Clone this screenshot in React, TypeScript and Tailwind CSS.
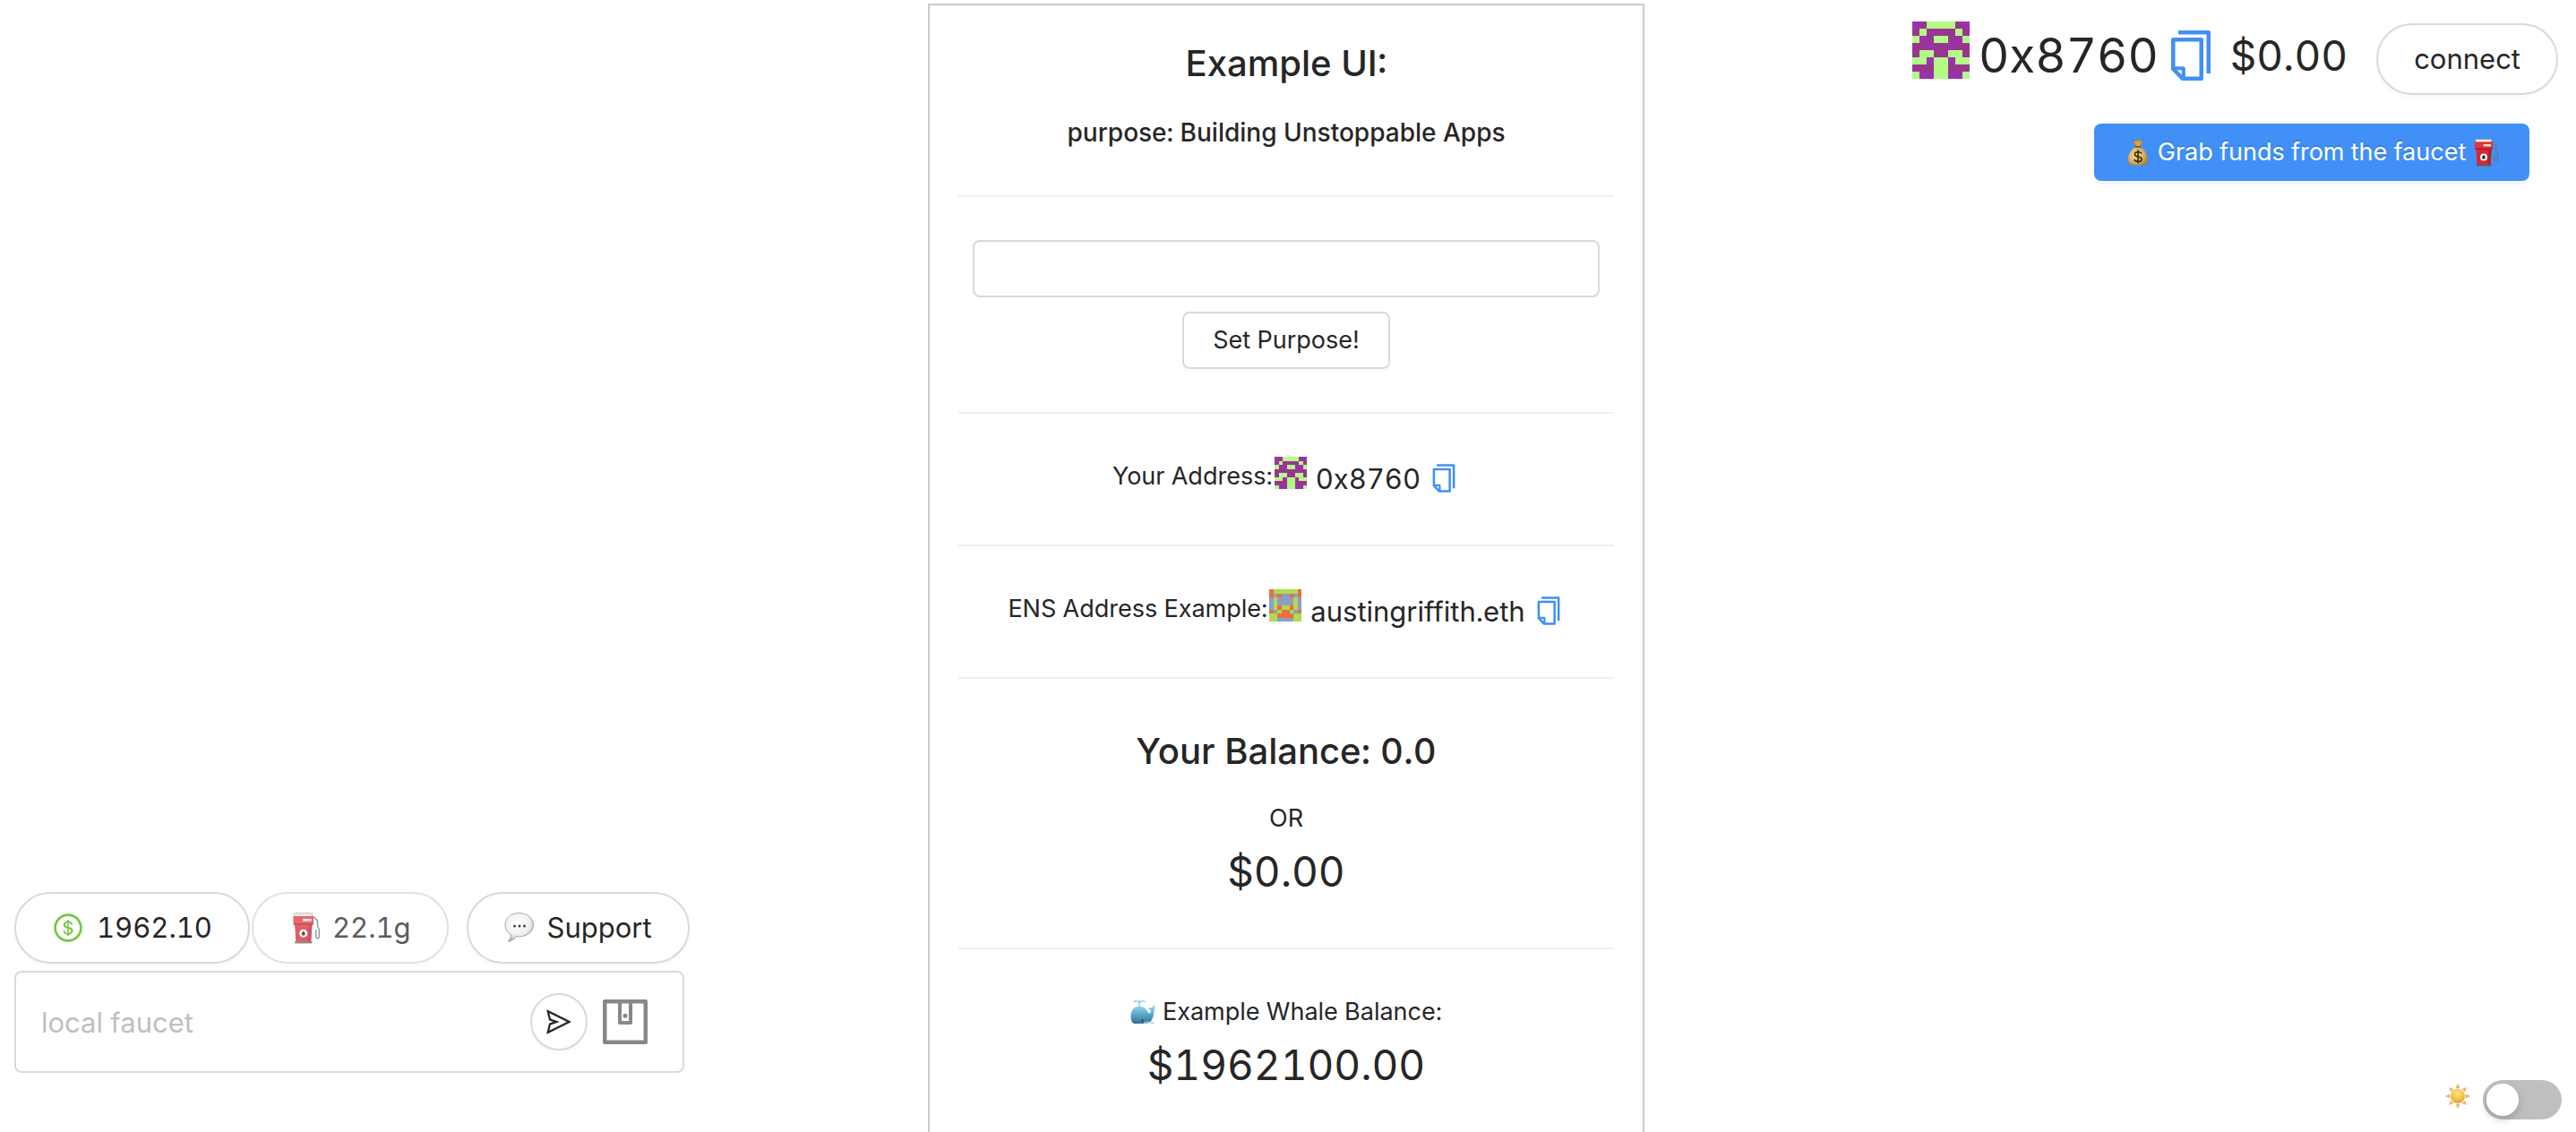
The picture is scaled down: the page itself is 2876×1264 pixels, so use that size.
import { useState } from "react";
import type { ReactNode } from "react";
import { AiOutlineCopy, AiOutlineDollar, AiOutlineSend, AiOutlineWallet } from "react-icons/ai";

type Palette = Record<string, string>;

const MY_BLOCKIE = ["PMGGGGMP", "MGMMMMGM", "GPMGGMPG", "MMPMMPMM", "MGGMMGGM", "GGPGGPGG", "MMMGGMMM", "GPPGGPPG"];
const MY_COLORS: Palette = { P: "#9b30b0", M: "#98368f", G: "#b3fb86" };
const ENS_BLOCKIE = ["OGGGGGGO", "OBOBBOBO", "BGBBBBGB", "BGBBBBGB", "BGOGGOGB", "OBGOOGBO", "GGOOOOGG", "GGBBBBGG"];
const ENS_COLORS: Palette = { O: "#e8703a", G: "#aedb4f", B: "#8f9dc4" };

function Blockie({ rows, colors, className }: { rows: string[]; colors: Palette; className: string }) {
  return (
    <svg viewBox="0 0 8 8" shapeRendering="crispEdges" className={className} aria-hidden="true">
      {rows.flatMap((row, y) =>
        row.split("").map((c, x) => <rect key={`${x}-${y}`} x={x} y={y} width="1" height="1" fill={colors[c]} />),
      )}
    </svg>
  );
}

function FuelPump({ className }: { className: string }) {
  return (
    <svg viewBox="0 0 32 32" className={className} role="img" aria-label="fuel pump">
      <path d="M24 5 28 9v5c0 1.500 1.700 2.500 1.700 5v5c0 3.200-3.200 3.200-3.200.5v-6.500" fill="none" stroke="#6d7680" strokeWidth="1.300" />
      <path d="M4.500 1.500h18.500l-.5 3.500H5z" fill="#efeaea" stroke="#9a7a7a" strokeWidth=".6" />
      <path d="M4 4.500h20v8l-1.500 1.500h-17L4 12.500z" fill="#e0333b" />
      <path d="M4 11.500h20l-1.500 2h-17z" fill="#ad1f27" />
      <rect x="13.500" y="7" width="8.500" height="2.500" fill="#f7dada" />
      <path d="M5.500 13.500h17L21.500 30H6.500z" fill="#d8282f" />
      <path d="M19.500 13.500h3L21.500 30h-2.500z" fill="#b51f27" />
      <path d="M5.500 29.500h17v2h-17z" fill="#6a5a5d" />
      <circle cx="14" cy="21.500" r="4" fill="#fff" />
      <path d="M14 18.800c1 1.500 1.800 2.200 1.800 3.200a1.800 1.800 0 0 1-3.600 0c0-1 .8-1.700 1.800-3.200z" fill="#222" />
    </svg>
  );
}

function MoneyBag({ className }: { className: string }) {
  return (
    <svg viewBox="0 0 32 32" className={className} role="img" aria-label="money bag">
      <defs>
        <radialGradient id="bag" cx=".4" cy=".45" r=".65">
          <stop offset="0" stopColor="#f6df9c" />
          <stop offset=".6" stopColor="#d9b163" />
          <stop offset="1" stopColor="#a47c38" />
        </radialGradient>
      </defs>
      <path d="M10 2 13.500 3.500l2.500-2 2.500 2L22 2l-3.500 7.500h-5z" fill="#cfa14d" stroke="#8a6224" strokeWidth=".5" />
      <path d="M13 10h6c4.500 3 8 8 8 14 0 4.500-2 6.500-5 6.500H10c-3 0-5-2-5-6.500 0-6 3.500-11 8-14z" fill="url(#bag)" />
      <path d="M12.500 10h7" stroke="#7a5216" strokeWidth="1.500" />
      <path d="M20 17.500c-.8-1.300-2.300-1.800-4-1.800-2.200 0-3.700 1-3.700 2.600 0 3.800 7.800 1.600 7.800 5.400 0 1.900-1.900 2.700-4.100 2.700-2 0-3.500-.7-4.300-2.200M16 13.500v15" fill="none" stroke="#33270f" strokeWidth="1.600" />
    </svg>
  );
}

function SpeechBubble({ className }: { className: string }) {
  return (
    <svg viewBox="0 0 36 36" className={className} role="img" aria-label="speech bubble">
      <defs>
        <radialGradient id="bubble" cx=".45" cy=".35" r=".65">
          <stop offset="0" stopColor="#ffffff" />
          <stop offset=".65" stopColor="#f0f0f0" />
          <stop offset="1" stopColor="#b0b0b0" />
        </radialGradient>
      </defs>
      <path
        d="M16.500 1.500C7.500 1.500 1 7 1 14.800c0 5 2.500 8.700 6.500 10.900 0 2.800-1 5.300-3.500 7.600 4.500-.5 7.500-2.800 9.500-5.600 11 1 19-4.700 19-12.900 0-7.800-7-13.300-16-13.300z"
        fill="url(#bubble)"
        stroke="#a0a0a0"
        strokeWidth=".9"
      />
      <circle cx="11.500" cy="16" r="1.500" fill="#444" />
      <circle cx="17" cy="16" r="1.500" fill="#444" />
      <circle cx="22.500" cy="16" r="1.500" fill="#444" />
    </svg>
  );
}

function Whale({ className }: { className: string }) {
  return (
    <svg viewBox="0 0 28 28" className={className} role="img" aria-label="whale">
      <defs>
        <linearGradient id="whale" x1="0" y1="0" x2="0" y2="1">
          <stop offset="0" stopColor="#9adcec" />
          <stop offset=".5" stopColor="#5ba9cc" />
          <stop offset="1" stopColor="#3a7199" />
        </linearGradient>
      </defs>
      <path d="M10 8V4.500M10 4.500C8.500 1.500 5.500 1 4 2.500M10 4.500c1.500-3 4.500-3.500 6-2M10 4V.8" fill="none" stroke="#8fd8ea" strokeWidth="1.500" strokeLinecap="round" />
      <path d="M.5 19C.5 11.500 4.500 7.500 10 7.500c6 0 8.500 4.500 10 7.500 1.500 1.200 3-.2 3-2.800-1.800-.7-2.600-1.700-2.600-2.700 1.600-.2 3.300 0 4.400-.8.600-1.200 1.200-2.200 2.200-2.700.600 3 .400 5-.8 6.800.4 6.500-2.200 12.500-7.200 14H4c-2.500-1-3.500-4-3.500-7.800z" fill="url(#whale)" />
      <path d="M1.800 22.500c3 3.300 8 4 12 1.500l2 2.700H4.500c-1.600-.5-2.500-2-2.700-4.200z" fill="#356a90" />
      <circle cx="13.500" cy="23.500" r="1" fill="#12222e" />
      <path d="M15 26.500c4-1.500 7-1.500 12 .3" fill="none" stroke="#9fd6ea" strokeWidth="1.600" />
    </svg>
  );
}

function Sun({ className }: { className: string }) {
  return (
    <svg viewBox="-16 -16 32 32" className={className} role="img" aria-label="sun">
      <defs>
        <radialGradient id="sun" cx=".5" cy=".3" r=".7">
          <stop offset="0" stopColor="#fde58a" />
          <stop offset=".6" stopColor="#f7c544" />
          <stop offset="1" stopColor="#e89f34" />
        </radialGradient>
      </defs>
      {[0, 45, 90, 135, 180, 225, 270, 315].map((angle) => (
        <path key={angle} d="M0-15.500-2.400-10.300h4.800z" fill="#f0b85a" stroke="#d99a52" strokeWidth=".4" transform={`rotate(${angle})`} />
      ))}
      <circle r="8.800" fill="url(#sun)" stroke="#e0a03c" strokeWidth=".6" />
    </svg>
  );
}

function Divider() {
  return <hr className="my-12 h-0.5 border-0 bg-[#f0f0f0]" />;
}

function AddressRow({ label, name, rows, colors }: { label: string; name: string; rows: string[]; colors: Palette }) {
  return (
    <div className="flex items-start justify-center">
      <span className="leading-[44px]">{label}</span>
      <Blockie rows={rows} colors={colors} className="ml-0.5 size-9" />
      <span className="ml-2.5 text-[31px] leading-[50px]">{name}</span>
      <button type="button" aria-label={`Copy ${name}`} className="mt-1.5 ml-2 text-[#4190f7]">
        <AiOutlineCopy className="size-9" />
      </button>
    </div>
  );
}

function Pill({ children, className = "" }: { children: ReactNode; className?: string }) {
  return (
    <button
      type="button"
      className={`flex h-20 items-center rounded-full border-2 border-[#d9d9d9] bg-white px-10 text-[31px] shadow-[0_4px_0_rgba(0,0,0,0.016)] ${className}`}
    >
      {children}
    </button>
  );
}

export default function App() {
  const [purpose, setPurpose] = useState("");
  const [faucet, setFaucet] = useState("");
  const [dark, setDark] = useState(false);

  return (
    <div className="grid h-screen grid-cols-[1fr_804px_1fr] overflow-hidden bg-white font-['Inter',sans-serif] text-[27px] leading-[44px] text-[#262626] tabular-nums">
      <aside className="flex flex-col items-start justify-end pb-[66px] pl-4">
        <div className="flex">
          <Pill>
            <AiOutlineDollar className="mr-3.5 size-9 text-[#73c73c]" />
            1962.10
          </Pill>
          <Pill className="ml-0.5 opacity-75">
            <FuelPump className="mr-3 size-9" />
            22.1g
          </Pill>
          <Pill className="ml-5">
            <SpeechBubble className="mr-3 size-9" />
            Support
          </Pill>
        </div>
        <div className="mt-2 flex h-[114px] w-[748px] items-center rounded-lg border-2 border-[#d9d9d9] pr-8">
          <input
            aria-label="local faucet"
            placeholder="local faucet"
            value={faucet}
            onChange={(e) => setFaucet(e.target.value)}
            className="h-full min-w-0 flex-1 bg-transparent px-7 text-[31px] outline-none placeholder:text-[#bfbfbf]"
          />
          <button
            type="button"
            aria-label="Send"
            className="flex size-16 items-center justify-center rounded-full border-2 border-[#d9d9d9] bg-white shadow-[0_4px_0_rgba(0,0,0,0.016)]"
          >
            <AiOutlineSend className="size-8" />
          </button>
          <button type="button" aria-label="Wallet" className="ml-2.5 text-[#888888]">
            <AiOutlineWallet className="size-16 -rotate-90" />
          </button>
        </div>
      </aside>

      <main className="min-h-0 pt-1 pr-1">
        <div className="min-h-full border-2 border-b-0 border-[#cccccc] p-8 text-center">
          <h2 className="mb-[22px] text-[40px] leading-[66px] font-medium">Example UI:</h2>
          <h4 className="text-[28px] leading-[44px] font-medium">purpose: Building Unstoppable Apps</h4>
          <Divider />
          <div className="flex flex-col items-center gap-4 px-4">
            <input
              aria-label="Purpose"
              value={purpose}
              onChange={(e) => setPurpose(e.target.value)}
              className="h-16 w-full rounded-lg border-2 border-[#d9d9d9] px-5 outline-none"
            />
            <button
              type="button"
              className="h-16 rounded-lg border-2 border-[#d9d9d9] bg-white px-8 shadow-[0_4px_0_rgba(0,0,0,0.016)]"
            >
              Set Purpose!
            </button>
          </div>
          <Divider />
          <AddressRow label="Your Address:" name="0x8760" rows={MY_BLOCKIE} colors={MY_COLORS} />
          <Divider />
          <AddressRow label="ENS Address Example:" name="austingriffith.eth" rows={ENS_BLOCKIE} colors={ENS_COLORS} />
          <Divider />
          <h2 className="mb-5 text-[40px] leading-[66px] font-medium">Your Balance: 0.0</h2>
          <p>OR</p>
          <p className="text-[46px] leading-[74px]">$0.00</p>
          <Divider />
          <p className="flex items-center justify-center gap-2">
            <Whale className="size-7" />
            Example Whale Balance:
          </p>
          <p className="text-[46px] leading-[74px]">$1962100.00</p>
        </div>
      </main>

      <aside className="flex flex-col items-end justify-between pt-6 pb-3.5">
        <div className="flex flex-col items-end">
          <div className="flex items-start pr-5">
            <Blockie rows={MY_BLOCKIE} colors={MY_COLORS} className="size-16" />
            <span className="ml-2.5 text-[53px] leading-[76px]">0x8760</span>
            <button type="button" aria-label="Copy address" className="mt-1.5 ml-1 text-[#4190f7]">
              <AiOutlineCopy className="size-16" />
            </button>
            <span className="ml-3 text-[46px] leading-[76px]">$0.00</span>
            <Pill className="mt-0.5 ml-8">connect</Pill>
          </div>
          <button
            type="button"
            className="mt-8 mr-[52px] flex h-16 w-[486px] items-center justify-center gap-1.5 rounded-lg bg-[#4190f7] text-white shadow-[0_4px_0_rgba(0,0,0,0.045)] [text-shadow:0_-2px_0_rgba(0,0,0,0.12)]"
          >
            <MoneyBag className="size-8" />
            Grab funds from the faucet
            <FuelPump className="size-8" />
          </button>
        </div>
        <label className="flex items-start gap-3.5 pr-4">
          <Sun className="mt-1 size-7" />
          <input
            type="checkbox"
            role="switch"
            aria-label="Dark mode"
            checked={dark}
            onChange={(e) => setDark(e.target.checked)}
            className="flex h-11 w-[88px] appearance-none items-center rounded-full bg-[#bfbfbf] px-1 before:size-9 before:rounded-full before:bg-white before:shadow-[0_4px_8px_rgba(0,35,11,0.2)] before:content-[''] checked:justify-end checked:bg-[#4190f7]"
          />
        </label>
      </aside>
    </div>
  );
}
